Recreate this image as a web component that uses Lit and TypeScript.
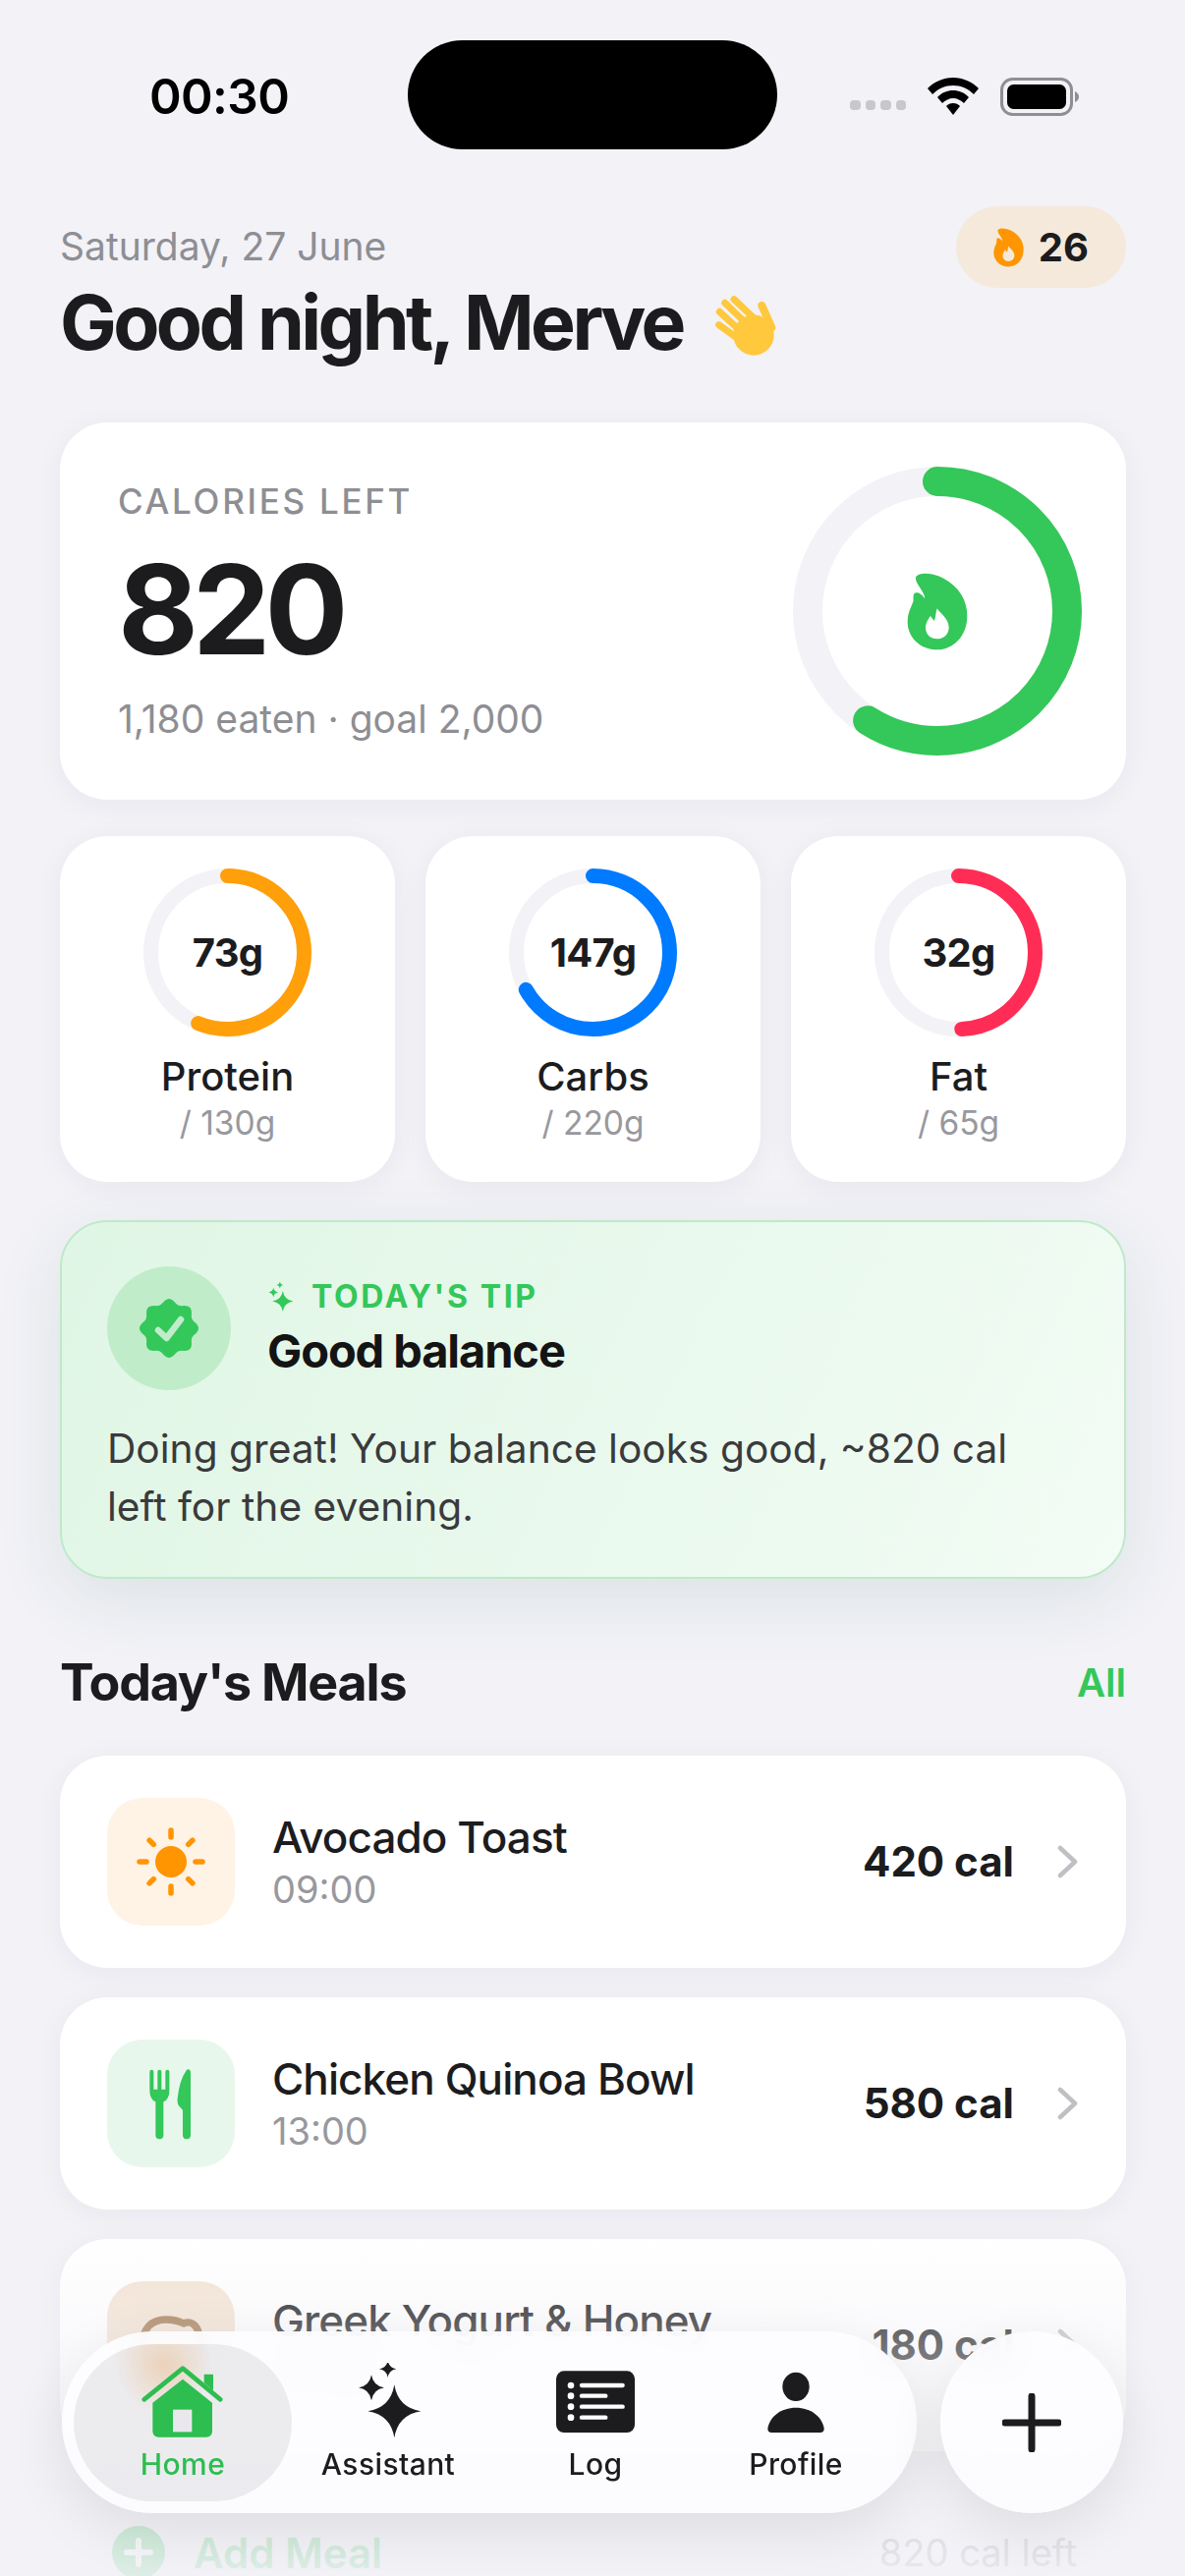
import { LitElement, css, html, svg } from "lit";
import { customElement } from "lit/decorators.js";

const macros = [
  { value: "73g", name: "Protein", goal: "/ 130g", pct: 73 / 130, color: "#ff9f0a" },
  { value: "147g", name: "Carbs", goal: "/ 220g", pct: 147 / 220, color: "#007aff" },
  { value: "32g", name: "Fat", goal: "/ 65g", pct: 32 / 65, color: "#ff2d55" },
];

const flame = (cls: string) => html`<svg class=${cls} viewBox="250 365 186 237">
  <path fill="currentColor" fill-rule="evenodd" d="M278 376C290 362 330 365 362 382C410 408 434 450 434 497C434 558 392 600 342 600C290 600 252 562 252 515C252 485 264 470 270 450C268 430 272 424 282 426C292 428 302 438 305 445C305 420 270 395 278 376ZM342 474C352 490 378 505 378 532C378 553 362 567 342 567C322 567 307 553 307 533C307 518 316 505 322 497C326 503 330 508 334 512C338 500 338 486 342 474Z"/>
</svg>`;

const star = (x: number, y: number, r: number) => {
  const k = r * 0.14;
  return `M${x} ${y - r}Q${x + k} ${y - k} ${x + r} ${y}Q${x + k} ${y + k} ${x} ${y + r}Q${x - k} ${y + k} ${x - r} ${y}Q${x - k} ${y - k} ${x} ${y - r}Z`;
};

// scalloped badge outline, 8 lobes
const seal = () => {
  const pts: string[] = [];
  for (let i = 0; i < 96; i++) {
    const a = (i / 96) * Math.PI * 2;
    const r = 27.6 + 2.4 * Math.cos(8 * a);
    pts.push(`${(30 + r * Math.sin(a)).toFixed(2)} ${(30 - r * Math.cos(a)).toFixed(2)}`);
  }
  return `M${pts.join("L")}Z`;
};

const sunRays = Array.from({ length: 8 }, (_, i) => i * 45);

const mealIcons = {
  sun: html`<svg class="meal-svg" viewBox="0 0 90 90">
    <circle cx="45" cy="45" r="16" fill="#ff9500"/>
    ${sunRays.map((d) => svg`<line x1="45" y1="20" x2="45" y2=${d % 90 ? 14 : 13} transform="rotate(${d} 45 45)" stroke="#ff9500" stroke-width="5.5" stroke-linecap="round"/>`)}
  </svg>`,
  fork: html`<svg class="meal-svg" viewBox="0 0 270 270">
    <path fill="#34c759" d="M70 38a6 6 0 0 1 12 0V92h12V38a6 6 0 0 1 12 0V92h12V38a6 6 0 0 1 12 0V95Q130 122 112 130V232a12 12 0 0 1-24 0V130Q70 122 70 95Z"/>
    <path fill="#34c759" d="M183 32Q195 28 195 42V232a12 12 0 0 1-24 0V155L160 143Q153 135 155 120Q160 65 183 32Z"/>
  </svg>`,
  cup: html`<svg class="meal-svg" viewBox="0 0 90 90">
    <path fill="none" stroke="#a2784c" stroke-width="7.5" stroke-linejoin="round" d="M18 46C14 28 26 19 40 19C48 19 54 21 58 23C66 19 76 26 74 46C73 62 66 74 58 74H34C26 74 20 62 18 46Z"/>
  </svg>`,
};

const meals = [
  { name: "Avocado Toast", time: "09:00", cal: "420 cal", icon: "sun", tile: "#fff3e6" },
  { name: "Chicken Quinoa Bowl", time: "13:00", cal: "580 cal", icon: "fork", tile: "#e8f7ec" },
  { name: "Greek Yogurt & Honey", time: "07:00", cal: "180 cal", icon: "cup", tile: "#f4e3d2" },
] as const;

const navItems = [
  {
    label: "Home",
    cls: "home",
    icon: html`<svg class="nav-svg" viewBox="0 0 270 240">
      <path fill="#2dbd50" d="M200 35h28v50l-28-24Z"/>
      <path fill="none" stroke="#2dbd50" stroke-width="14" stroke-linecap="round" stroke-linejoin="round" d="M17 112L135 17L250 112"/>
      <path fill="#2dbd50" d="M135 50L225 122V208Q225 227 206 227H62Q43 227 43 208V122Z"/>
      <rect x="105" y="143" width="58" height="68" fill="#e9e9ed"/>
    </svg>`,
  },
  {
    label: "Assistant",
    cls: "assistant",
    icon: html`<svg class="nav-svg" viewBox="0 0 270 240">
      <path fill="#1c1c1e" d=${star(154, 148, 81)}/>
      <path fill="#1c1c1e" d=${star(84, 76, 39)}/>
      <path fill="#1c1c1e" d=${star(134, 19, 26)}/>
    </svg>`,
  },
  {
    label: "Log",
    cls: "log",
    icon: html`<svg class="nav-svg" viewBox="0 0 270 240">
      <rect x="15" y="25" width="240" height="188" rx="24" fill="#1c1c1e"/>
      ${[69, 101, 134, 167].map((y, i) => svg`
        <circle cx="60" cy=${y} r="10" fill="#fff"/>
        <line x1="93" x2=${i % 2 ? 166 : 218} y1=${y} y2=${y} stroke="#fff" stroke-width="13" stroke-linecap="round"/>`)}
    </svg>`,
  },
  {
    label: "Profile",
    cls: "profile",
    icon: html`<svg class="nav-svg" viewBox="0 0 270 240">
      <ellipse cx="135" cy="73" rx="41" ry="44" fill="#1c1c1e"/>
      <path fill="#1c1c1e" d="M49 201C54 165 89 137 135 137C181 137 216 165 221 201Q221 213 209 213H61Q49 213 49 201Z"/>
    </svg>`,
  },
];

@customElement("app-root")
export class AppRoot extends LitElement {
  static styles = css`
    :host {
      display: block;
      position: relative;
      width: 1206px;
      height: 2622px;
      overflow: hidden;
      background: #f2f2f7;
      color: #1c1c1e;
      font-family: Inter, "Noto Sans", sans-serif;
    }
    svg { display: block; }

    /* status bar */
    .status { display: flex; align-items: center; padding: 41px 106px 0 152px; }
    .time { width: 263px; font-size: 49.5px; font-weight: 600; color: #000; padding-top: 3px; letter-spacing: -0.6px; }
    .island { width: 376px; height: 111px; border-radius: 56px; background: #000; }
    .status-right { display: flex; align-items: center; margin-left: 74px; padding-top: 3px; }
    .dots { display: flex; gap: 5px; margin-top: 18px; margin-right: 22px; }
    .dots i { width: 10.5px; height: 10px; border-radius: 4px; background: #c7c7cc; }
    .wifi { width: 52px; height: 38px; margin-right: 22px; }
    .battery { width: 81px; height: 39px; }

    main { padding: 0 60px 0 61px; }

    /* greeting */
    .head { display: flex; justify-content: space-between; align-items: flex-start; margin-top: 58px; height: 220px; }
    .date { margin-top: 18px; font-size: 39px; line-height: 46px; color: #8e8e93; }
    .title { display: flex; align-items: center; margin-top: 8px; font-size: 77px; line-height: 92px; font-weight: 700; letter-spacing: -3.6px; white-space: nowrap; }
    .wave { width: 85px; height: 80px; margin-left: 22px; margin-top: 4px; }
    .streak { display: flex; align-items: center; gap: 15px; height: 83px; padding: 0 38px; border-radius: 42px; background: #f5e9dc; font-size: 40px; font-weight: 700; }
    .streak-flame { width: 31px; height: 40px; color: #ff9500; }

    .card { background: #fff; border-radius: 48px; box-shadow: 0 5px 30px rgba(30, 30, 60, 0.05); }

    /* calories */
    .hero { display: flex; justify-content: space-between; align-items: center; height: 384px; padding: 0 45px 0 59px; box-sizing: border-box; }
    .eyebrow { font-size: 35px; line-height: 42px; font-weight: 500; letter-spacing: 2.7px; color: #8e8e93; }
    .big { margin-top: 26px; font-size: 126px; line-height: 126px; font-weight: 700; letter-spacing: -6px; }
    .sub { margin-top: 26px; font-size: 39px; line-height: 46px; color: #8e8e93; }
    .ring { position: relative; display: grid; place-items: center; flex: none; }
    .ring svg.track { transform: rotate(-90deg); }
    .ring-center { position: absolute; inset: 0; display: grid; place-items: center; }
    .hero-flame { width: 62px; height: 79px; color: #34c759; }

    /* macros */
    .macros { display: grid; grid-template-columns: repeat(3, 1fr); gap: 31px; margin-top: 37px; }
    .macro { display: flex; flex-direction: column; align-items: center; height: 352px; padding-top: 33px; box-sizing: border-box; }
    .macro-value { font-size: 40px; font-weight: 700; letter-spacing: -0.8px; }
    .macro-name { margin-top: 17px; font-size: 40px; line-height: 48px; font-weight: 500; }
    .macro-goal { margin-top: 3px; font-size: 33.5px; line-height: 40px; color: #98989d; }

    /* tip */
    .tip {
      margin-top: 39px;
      height: 365px;
      box-sizing: border-box;
      padding: 45px 46px 0 46px;
      border: 2.5px solid #bdeac9;
      border-radius: 48px;
      background: linear-gradient(115deg, #e0f6e5 0%, #e9f9ed 55%, #f3fcf5 100%);
      box-shadow: 0 20px 70px rgba(40, 100, 70, 0.1);
    }
    .tip-top { display: flex; align-items: center; gap: 37px; }
    .tip-badge { display: grid; place-items: center; width: 126px; height: 126px; border-radius: 50%; background: #c0ecca; }
    .tip-badge svg { width: 60px; height: 60px; }
    .tip-label { display: flex; align-items: center; gap: 17px; font-size: 32px; line-height: 40px; font-weight: 700; letter-spacing: 2.6px; color: #34c759; }
    .tip-label svg { width: 28px; height: 32px; }
    .tip-title { margin-top: 6px; font-size: 47px; line-height: 58px; font-weight: 700; letter-spacing: -1.1px; color: #141414; }
    .tip-body { margin: 30px 0 0; font-size: 40.7px; line-height: 59px; color: #3a3a3c; }

    /* meals */
    .meals-head { display: flex; justify-content: space-between; align-items: center; margin-top: 72px; height: 66px; }
    .meals-head h2 { margin: 0; font-size: 52px; font-weight: 700; letter-spacing: -1.2px; }
    .meals-head a { font-size: 40px; font-weight: 600; color: #34c759; }
    .meals { display: flex; flex-direction: column; gap: 30px; margin-top: 42px; }
    .meal { display: flex; align-items: center; height: 216px; padding: 0 48px; box-sizing: border-box; }
    .tile { display: grid; place-items: center; flex: none; width: 130px; height: 130px; border-radius: 36px; }
    .meal-svg { width: 90px; height: 90px; }
    .meal-text { flex: 1; margin-left: 38px; }
    .meal-name { margin-top: -2px; font-size: 44px; line-height: 52px; font-weight: 500; letter-spacing: -0.9px; }
    .meal-time { margin-top: 5px; font-size: 38px; line-height: 44px; color: #98989d; }
    .meal-cal { font-size: 42px; font-weight: 700; margin-top: -2px; }
    .chev { width: 22px; height: 34px; margin-left: 44px; }

    .add { display: flex; align-items: center; justify-content: space-between; margin-top: 76px; padding: 0 50px 0 53px; }
    .add-left { display: flex; align-items: center; gap: 29px; font-size: 42px; font-weight: 600; color: #34c759; }
    .add-plus { width: 54px; height: 54px; }
    .add-right { font-size: 38px; color: #8e8e93; }

    /* overlays */
    .fade {
      position: absolute; left: 0; right: 0; top: 2270px; bottom: 0; pointer-events: none;
      background: linear-gradient(180deg, rgba(242,242,247,0) 0, rgba(242,242,247,0.3) 90px, rgba(242,242,247,0.45) 130px, rgba(242,242,247,0.85) 330px, rgba(242,242,247,0.9) 352px);
    }
    .nav, .fab {
      position: absolute; top: 2373px; height: 185px; box-sizing: border-box;
      background: rgba(253, 253, 255, 0.92);
      -webkit-backdrop-filter: blur(18px); backdrop-filter: blur(18px);
      box-shadow: 0 18px 60px rgba(0, 0, 0, 0.09);
    }
    .nav { left: 63px; width: 870px; border-radius: 93px; display: flex; padding: 13px 12px; }
    .nav-item { display: flex; flex-direction: column; align-items: center; justify-content: flex-start; padding-top: 19px; box-sizing: border-box; height: 160px; font-size: 30px; line-height: 36px; font-weight: 500; letter-spacing: 0.4px; }
    .nav-item span { margin-top: 1px; }
    .nav-svg { width: 90px; height: 80px; margin-bottom: 4px; }
    .home {
      width: 222px;
      border-radius: 80px;
      background: radial-gradient(circle 50px at 92px 21px, rgba(238, 170, 105, 0.38), rgba(238, 170, 105, 0)), rgba(120, 120, 128, 0.13);
      color: #2dbd50;
    }
    .assistant { width: 196px; }
    .log { width: 226px; }
    .profile { width: 182px; }
    .fab { left: 957px; width: 186px; border-radius: 50%; display: grid; place-items: center; }
    .fab svg { width: 60px; height: 60px; }
  `;

  private ring(size: number, stroke: number, pct: number, color: string, content: unknown) {
    const r = (size - stroke) / 2;
    const c = 2 * Math.PI * r;
    const mid = size / 2;
    return html`<div class="ring">
      <svg class="track" width=${size} height=${size}>
        <circle cx=${mid} cy=${mid} r=${r} fill="none" stroke="#f2f2f7" stroke-width=${stroke}/>
        <circle cx=${mid} cy=${mid} r=${r} fill="none" stroke=${color} stroke-width=${stroke} stroke-linecap="round" stroke-dasharray="${pct * c} ${c}"/>
      </svg>
      <div class="ring-center">${content}</div>
    </div>`;
  }

  render() {
    return html`
      <header class="status">
        <div class="time">00:30</div>
        <div class="island"></div>
        <div class="status-right">
          <div class="dots"><i></i><i></i><i></i><i></i></div>
          <svg class="wifi" viewBox="0 0 52 38">
            <path fill="#000" d="M26 0C16 0 7 4 0 11L5 17C11 11 18 8 26 8C34 8 41 11 47 17L52 11C45 4 36 0 26 0Z"/>
            <path fill="#000" d="M26 13C20 13 15 15 10 20L15 26C18 23 22 21 26 21C30 21 34 23 37 26L42 20C37 15 32 13 26 13Z"/>
            <path fill="#000" d="M26 26C23 26 21 27 19 29L26 38L33 29C31 27 29 26 26 26Z"/>
          </svg>
          <svg class="battery" viewBox="0 0 81 39">
            <rect x="1.5" y="1.5" width="71" height="36" rx="11" fill="none" stroke="#8e8e93" stroke-width="3"/>
            <rect x="7" y="7" width="60" height="25" rx="6.5" fill="#000"/>
            <path d="M76 14Q80 16 80 19.5Q80 23 76 25Z" fill="#8e8e93"/>
          </svg>
        </div>
      </header>

      <main>
        <section class="head">
          <div>
            <div class="date">Saturday, 27 June</div>
            <div class="title">Good night, Merve
              <svg class="wave" viewBox="0 0 255 240">
                <circle cx="150" cy="153" r="62" fill="#ffc83d"/>
                <g stroke="#ffc83d" stroke-linecap="round" fill="none">
                  <line x1="175" y1="63" x2="205" y2="130" stroke-width="24"/>
                  <line x1="90" y1="44" x2="165" y2="115" stroke-width="21"/>
                  <line x1="62" y1="55" x2="140" y2="130" stroke-width="21"/>
                  <line x1="46" y1="82" x2="120" y2="150" stroke-width="21"/>
                  <line x1="44" y1="122" x2="110" y2="170" stroke-width="21"/>
                </g>
              </svg>
            </div>
          </div>
          <div class="streak">${flame("streak-flame")}<span>26</span></div>
        </section>

        <section class="card hero">
          <div>
            <div class="eyebrow">CALORIES LEFT</div>
            <div class="big">820</div>
            <div class="sub">1,180 eaten · goal 2,000</div>
          </div>
          ${this.ring(294, 30, 1180 / 2000, "#34c759", flame("hero-flame"))}
        </section>

        <section class="macros">
          ${macros.map(
            (m) => html`<div class="card macro">
              ${this.ring(171, 15, m.pct, m.color, html`<span class="macro-value">${m.value}</span>`)}
              <div class="macro-name">${m.name}</div>
              <div class="macro-goal">${m.goal}</div>
            </div>`,
          )}
        </section>

        <section class="tip">
          <div class="tip-top">
            <div class="tip-badge">
              <svg viewBox="0 0 60 60">
                <path fill="#34c759" d=${seal()}/>
                <path fill="none" stroke="#c0ecca" stroke-width="6.5" stroke-linecap="round" stroke-linejoin="round" d="M19 32L27.5 40L42 21"/>
              </svg>
            </div>
            <div>
              <div class="tip-label">
                <svg viewBox="440 55 85 97">
                  <path fill="#34c759" d=${star(488, 117, 32)}/>
                  <path fill="#34c759" d=${star(459, 90, 15)}/>
                  <path fill="#34c759" d=${star(479, 67, 10)}/>
                </svg>
                <span>TODAY'S TIP</span>
              </div>
              <div class="tip-title">Good balance</div>
            </div>
          </div>
          <p class="tip-body">Doing great! Your balance looks good, ~820 cal<br>left for the evening.</p>
        </section>

        <section class="meals-head">
          <h2>Today's Meals</h2>
          <a>All</a>
        </section>

        <section class="meals">
          ${meals.map(
            (m) => html`<div class="card meal">
              <div class="tile" style="background:${m.tile}">${mealIcons[m.icon]}</div>
              <div class="meal-text">
                <div class="meal-name">${m.name}</div>
                <div class="meal-time">${m.time}</div>
              </div>
              <div class="meal-cal">${m.cal}</div>
              <svg class="chev" viewBox="0 0 22 34">
                <path fill="none" stroke="#c0c0c4" stroke-width="4.5" stroke-linecap="round" stroke-linejoin="round" d="M3 3L18 17L3 31"/>
              </svg>
            </div>`,
          )}
        </section>

        <section class="add">
          <div class="add-left">
            <svg class="add-plus" viewBox="0 0 54 54">
              <circle cx="27" cy="27" r="27" fill="#34c759"/>
              <path stroke="#fff" stroke-width="6" stroke-linecap="round" d="M27 15V39M15 27H39"/>
            </svg>
            <span>Add Meal</span>
          </div>
          <div class="add-right">820 cal left</div>
        </section>
      </main>

      <div class="fade"></div>
      <nav class="nav">
        ${navItems.map((n) => html`<div class="nav-item ${n.cls}">${n.icon}<span>${n.label}</span></div>`)}
      </nav>
      <div class="fab">
        <svg viewBox="0 0 60 60">
          <path stroke="#1c1c1e" stroke-width="7" stroke-linecap="round" d="M30 3V57M3 30H57"/>
        </svg>
      </div>
    `;
  }
}
